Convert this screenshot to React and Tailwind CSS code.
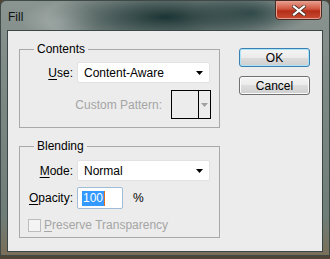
import React from 'react';

const font = { fontFamily: '"Liberation Sans", Arial, sans-serif' };

function Arrow({ color = '#000' }) {
  return (
    <svg width="7" height="4" viewBox="0 0 7 4">
      <path d="M0 0h7L3.5 4z" fill={color} />
    </svg>
  );
}

function Select({ value }) {
  return (
    <div className="w-[133px] h-[21px] bg-white border border-[#e2e2e2] rounded-[2px] flex items-center justify-between pl-[6px] pr-[6px]">
      <span className="text-[12px] text-black">{value}</span>
      <Arrow />
    </div>
  );
}

function Group({ title, children, className }) {
  return (
    <fieldset className={`w-[201px] border border-[#a9a9a9] ${className}`}>
      <legend className="ml-[14px] px-[3px] text-[12px] leading-[14px] text-black">{title}</legend>
      {children}
    </fieldset>
  );
}

function Button({ children, primary }) {
  return (
    <div
      className={`w-[71px] h-[19px] rounded-[3px] border flex items-center justify-center text-[12px] text-black bg-[linear-gradient(#f4f4f4,#ebebeb_50%,#dddddd_50%,#cfcfcf)] ${
        primary ? 'border-[#3c7fb1] shadow-[inset_0_0_0_1px_#a9e4f9]' : 'border-[#707070] shadow-[inset_0_0_0_1px_#fbfbfb]'
      }`}
    >
      {children}
    </div>
  );
}

export default function App() {
  return (
    <div className="w-[330px] h-[259px] bg-[#4e4536] overflow-hidden" style={font}>
      <div className="w-[330px] h-[256px] rounded-t-[6px] border border-[#3f4a48] bg-[radial-gradient(ellipse_120px_30px_at_165px_16px,#1b3434,#1b343400),radial-gradient(ellipse_60px_22px_at_250px_12px,#3a5252,#3a525200),radial-gradient(ellipse_40px_20px_at_60px_20px,#a3aca9,#a3aca900),linear-gradient(#8a9490,#7b8783_40%,#6f7d78_85%,#7a6e58)] flex flex-col">
        {/* title bar */}
        <div className="h-[29px] flex items-start justify-between">
          <span className="ml-[7px] mt-[7px] text-[12px] text-[#0f1414]">Fill</span>
          <div className="mr-[7px] -mt-px w-[47px] h-[20px] rounded-b-[4px] border border-[#4a2a24] bg-[linear-gradient(#e8a090,#d0553e_45%,#b52e18_55%,#c84a32)] shadow-[inset_0_0_0_1px_#e6a090] flex items-center justify-center">
            <svg width="14" height="11" viewBox="0 0 14 11">
              <path d="M2 1.5L12 9.5M12 1.5L2 9.5" stroke="#44302c" strokeWidth="3.6" strokeLinecap="square" />
              <path d="M2 1.5L12 9.5M12 1.5L2 9.5" stroke="#ffffff" strokeWidth="2.2" strokeLinecap="square" />
            </svg>
          </div>
        </div>

        {/* client area */}
        <div className="ml-[6px] w-[316px] h-[222px] border border-[#3b4646] bg-[#ececec] flex">
          <div className="ml-[11px] flex flex-col">
            <Group title="Contents" className="mt-[11px] h-[86px]">
              <div className="mt-[6px] flex items-center">
                <span className="w-[53px] text-right text-[12px] text-black">
                  <span className="underline underline-offset-2">U</span>se:
                </span>
                <div className="ml-[4px]"><Select value="Content-Aware" /></div>
              </div>
              <div className="mt-[7px] flex items-center">
                <span className="w-[142px] text-right text-[12px] text-[#a5a5a5]">Custom Pattern:</span>
                <div className="ml-[9px] w-[40px] h-[29px] border border-black bg-[#ececec] flex">
                  <div className="flex-1" />
                  <div className="w-[12px] border-l border-black flex items-center justify-center">
                    <Arrow color="#a0a0a0" />
                  </div>
                </div>
              </div>
            </Group>

            <Group title="Blending" className="mt-[11px] h-[99px]">
              <div className="mt-[7px] flex items-center">
                <span className="w-[53px] text-right text-[12px] text-black">
                  <span className="underline underline-offset-2">M</span>ode:
                </span>
                <div className="ml-[4px]"><Select value="Normal" /></div>
              </div>
              <div className="mt-[6px] flex items-center">
                <span className="w-[53px] text-right text-[12px] text-black">
                  <span className="underline underline-offset-2">O</span>pacity:
                </span>
                <div className="ml-[4px] w-[46px] h-[22px] bg-white border border-[#9fbcd8] rounded-[2px] flex items-center pl-[4px]">
                  <span className="bg-[#3399ff] text-white text-[12px] leading-[15px] px-px">100</span>
                  <span className="w-px h-[15px] bg-[#e0701e]" />
                </div>
                <span className="ml-[10px] text-[12px] text-black">%</span>
              </div>
              <div className="mt-[7px] ml-[8px] flex items-center">
                <div className="w-[13px] h-[13px] border border-[#bcbcbc] bg-[#f4f4f4]" />
                <span className="ml-[3px] text-[12px] text-[#a5a5a5]">
                  <span className="underline underline-offset-2">P</span>reserve Transparency
                </span>
              </div>
            </Group>
          </div>

          <div className="ml-[19px] mt-[17px] flex flex-col gap-[9px]">
            <Button primary>OK</Button>
            <Button>Cancel</Button>
          </div>
        </div>
      </div>
    </div>
  );
}
